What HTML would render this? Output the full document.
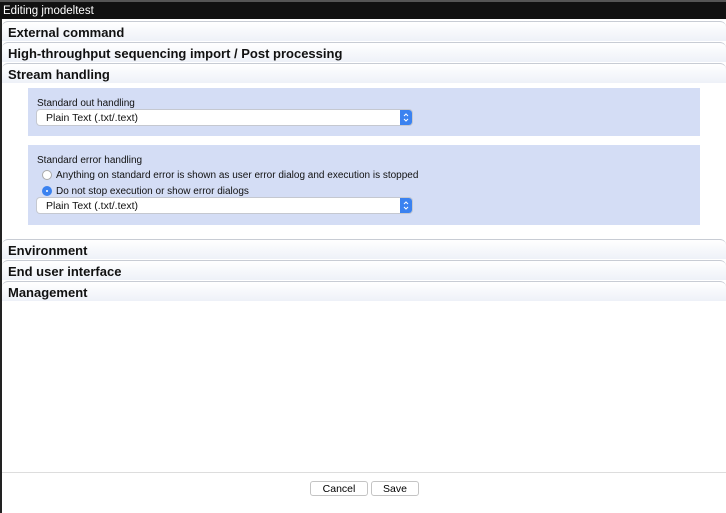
<html><head><style>
body{margin:0;width:726px;height:513px;background:#fff;font-family:"Liberation Sans",sans-serif;position:relative;overflow:hidden}
.t{position:absolute;left:0;top:0;width:726px;height:19px;background:#111;border-top:2px solid #555;box-sizing:border-box;color:#fff;font-size:11.5px;line-height:18px;padding-left:3px}
.lb{position:absolute;left:0;top:19px;width:2px;height:494px;background:#222}
.h{position:absolute;left:2px;width:724px;height:20px;background:linear-gradient(#fff,#eef1f8);border-top:1px solid #c8ccd4;border-radius:6px 6px 0 0;box-sizing:border-box;font-weight:bold;font-size:13px;line-height:21px;padding-left:6px;color:#111}
.p{position:absolute;left:28px;width:672px;background:#d4ddf5;font-size:10px;color:#111}
.s{position:absolute;left:9px;width:375px;height:15px;background:#fff;border-radius:3px;box-shadow:0 0 0 1px #c5c8d0;font-size:10.5px;line-height:16px;padding-left:9px;box-sizing:border-box}
.s i{position:absolute;right:0;top:0;width:12px;height:15px;background:#3b82f0;border-radius:0 3px 3px 0}
.r{position:absolute;left:14px;width:10px;height:10px;border-radius:50%;border:1px solid #aaa;background:#fff;box-sizing:border-box}
.r.on{background:#3b82f0;border-color:#3b82f0}
.r.on:after{content:"";position:absolute;left:3px;top:3px;width:2px;height:2px;background:#fff;border-radius:50%}
.b{position:absolute;top:481px;height:15px;background:#fff;border:1px solid #c4c4c4;border-radius:3px;box-sizing:border-box;font-size:10.5px;text-align:center;line-height:15px}
</style></head><body>
<div class="t">Editing jmodeltest</div><div class="lb"></div>
<div class="h" style="top:21px">External command</div>
<div class="h" style="top:42px">High-throughput sequencing import / Post processing</div>
<div class="h" style="top:63px">Stream handling</div>
<div class="p" style="top:88px;height:48px"><div style="position:absolute;left:9px;top:10px">Standard out handling</div><div class="s" style="top:22px">Plain Text (.txt/.text)<i><svg width="12" height="15"><path d="M4 6 L6 4 L8 6 M4 9 L6 11 L8 9" stroke="#fff" fill="none" stroke-width="1"/></svg></i></div></div>
<div class="p" style="top:145px;height:80px"><div style="position:absolute;left:9px;top:10px">Standard error handling</div>
<div class="r" style="top:25px"></div><div style="position:absolute;left:28px;top:25px">Anything on standard error is shown as user error dialog and execution is stopped</div>
<div class="r on" style="top:41px"></div><div style="position:absolute;left:28px;top:41px">Do not stop execution or show error dialogs</div>
<div class="s" style="top:53px">Plain Text (.txt/.text)<i><svg width="12" height="15"><path d="M4 6 L6 4 L8 6 M4 9 L6 11 L8 9" stroke="#fff" fill="none" stroke-width="1"/></svg></i></div></div>
<div class="h" style="top:239px">Environment</div>
<div class="h" style="top:260px">End user interface</div>
<div class="h" style="top:281px">Management</div>
<div style="position:absolute;left:2px;top:472px;width:724px;height:1px;background:#ddd"></div>
<div class="b" style="left:310px;width:58px">Cancel</div>
<div class="b" style="left:371px;width:48px">Save</div>
</body></html>
